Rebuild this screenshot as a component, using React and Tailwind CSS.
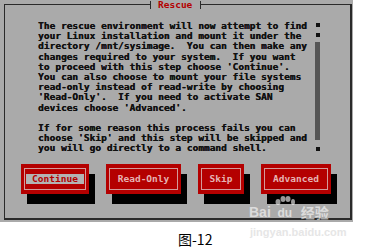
const LINES = [
  "The rescue environment will now attempt to find",
  "your Linux installation and mount it under the",
  "directory /mnt/sysimage.  You can then make any",
  "changes required to your system.  If you want",
  "to proceed with this step choose 'Continue'.",
  "You can also choose to mount your file systems",
  "read-only instead of read-write by choosing",
  "'Read-Only'.  If you need to activate SAN",
  "devices choose 'Advanced'.",
  "",
  "If for some reason this process fails you can",
  "choose 'Skip' and this step will be skipped and",
  "you will go directly to a command shell.",
];

const BUTTONS = [
  { label: 'Continue', w: 'w-[68px]', focus: true },
  { label: 'Read-Only', w: 'w-[75px]' },
  { label: 'Skip', w: 'w-[46px]' },
  { label: 'Advanced', w: 'w-[70px]' },
];

const mono = { fontFamily: '"DejaVu Sans Mono", "Liberation Mono", monospace' };

function TuiButton({ label, w, focus }) {
  return (
    <div className={`${w} h-[30px] bg-[#b40000] shadow-[6px_10px_0_0_#000] p-[4px_3px] flex`}>
      <div className="flex-1 border border-[#d49a9a] flex items-center justify-center">
        {focus ? (
          <span className="bg-[#b3b3b3] text-[#b40000] px-[6px] h-[10px] leading-[10px]">{label}</span>
        ) : (
          <span className="text-[#e6b3b3] leading-[10px]">{label}</span>
        )}
      </div>
    </div>
  );
}

export default function App() {
  return (
    <div className="relative w-[367px] h-[251px] bg-white overflow-hidden font-bold text-[9.5px]" style={mono}>
      <div className="w-[353px] h-[222px] bg-[#aaaaaa] pt-[4px] pl-[4px]">
        <div className="w-[348px] h-[216px] border-l border-t border-r-2 border-b-2 border-[#2a2a2a] flex flex-col">
          <div className="h-[150px] flex">
            <div className="w-[309px] pl-[33px] pt-[16px] text-[#111] whitespace-pre leading-[10.2px] [text-shadow:0.3px_0_0_#111]">
              {LINES.map((l, i) => (
                <div key={i} className="h-[10.2px]">{l}</div>
              ))}
            </div>
            <div className="ml-[1px] pt-[18px] flex flex-col items-center w-[5px]">
              <div className="w-[4px] h-[4px] bg-[#111]" />
              <div className="w-[4px] h-[4px] bg-[#111] mt-[6px]" />
              <div className="w-[5px] h-[98px] bg-[#555] mt-[5px]" />
              <div className="w-[4px] h-[4px] bg-[#111] mt-[7px]" />
            </div>
          </div>
          <div className="mt-[9px] pl-[16px] flex gap-[17px]">
            {BUTTONS.map((b) => (
              <TuiButton key={b.label} {...b} />
            ))}
          </div>
        </div>
      </div>

      <div className="absolute left-[150px] top-[1px] h-[8px] px-[7px] border-x border-[#2a2a2a] bg-[#aaaaaa] text-[#b40000] leading-[8px] pr-[8px]">
        Rescue
      </div>

      <div className="absolute left-[249px] top-[196px] flex items-end gap-[4px] text-white/60 font-bold" style={{ fontFamily: 'Arial, "Noto Sans CJK SC", sans-serif' }}>
        <span className="text-[14px] leading-[14px]">Bai</span>
        <span className="flex flex-col items-center">
          <svg width="20" height="11" viewBox="0 0 20 11" className="fill-white/60">
            <ellipse cx="3" cy="6" rx="2.5" ry="3" />
            <ellipse cx="8" cy="3" rx="2.5" ry="3" />
            <ellipse cx="13" cy="3" rx="2.5" ry="3" />
            <ellipse cx="18" cy="6" rx="2" ry="3" />
          </svg>
          <span className="text-[12px] leading-[12px]">du</span>
        </span>
        <span className="text-[14px] leading-[14px] ml-[2px]" style={{ fontFamily: '"Noto Sans CJK SC", sans-serif' }}>经验</span>
      </div>
      <div className="absolute left-[250px] top-[227px] text-[11px] leading-[11px] text-[#e6e6e6]" style={{ fontFamily: 'Arial, sans-serif' }}>
        jingyan.baidu.com
      </div>

      <div className="absolute left-[178px] top-[231px] text-[14px] leading-[16px] text-black font-normal" style={{ fontFamily: '"Noto Sans CJK SC", "Liberation Sans", sans-serif' }}>
        图-12
      </div>
    </div>
  );
}
